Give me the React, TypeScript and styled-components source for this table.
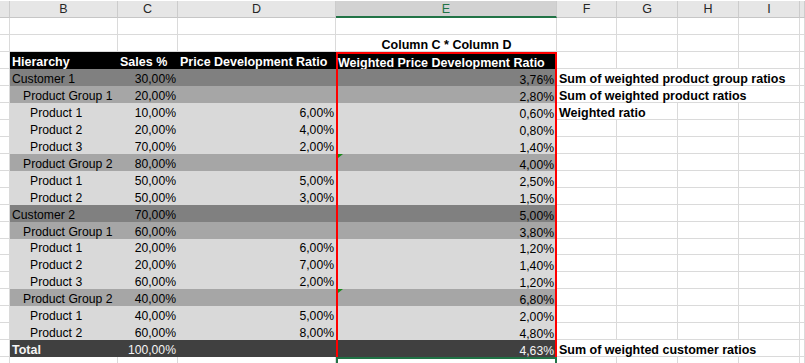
import styled, { createGlobalStyle, css } from 'styled-components'

const GlobalStyle = createGlobalStyle`
  html, body {
    margin: 0;
    padding: 0;
    background: #ffffff;
  }
  body {
    font-family: "Liberation Sans", Arial, sans-serif;
    overflow: hidden;
  }
`

const GRID = '#dadada'
const COLUMNS = '10px 108px 60px 158px 221px 60px 61px 61px 61px 1fr'
const ROW_H = '16.94px'

type Level = 'head' | 'customer' | 'group' | 'product' | 'total'
type Align = 'left' | 'right' | 'center'
type Edge = 'top' | 'side' | 'selected'

const FILL: Record<Level, string> = {
  head: '#000000',
  customer: '#808080',
  group: '#a6a6a6',
  product: '#d9d9d9',
  total: '#404040',
}

const INK: Record<Level, string> = {
  head: '#ffffff',
  customer: '#000000',
  group: '#000000',
  product: '#000000',
  total: '#f4f4f4',
}

const INDENT: Record<Level, number> = {
  head: 2,
  customer: 2,
  group: 13,
  product: 20,
  total: 2,
}

const Sheet = styled.div`
  width: 805px;
  height: 363px;
  overflow: hidden;
  padding-top: 1.4px;
  box-sizing: border-box;
`

const HeaderRow = styled.div`
  display: grid;
  grid-template-columns: ${COLUMNS};
  height: ${ROW_H};
`

const HeaderCell = styled.div<{ $active?: boolean }>`
  box-sizing: border-box;
  display: flex;
  align-items: center;
  justify-content: center;
  background: ${(p) => (p.$active ? '#d2d2d2' : '#e6e6e6')};
  color: ${(p) => (p.$active ? '#217346' : '#262626')};
  border-right: 1px solid #cccccc;
  border-bottom: ${(p) => (p.$active ? '2px solid #217346' : '1px solid #c6c6c6')};
  font-size: 12.5px;
`

const Row = styled.div`
  display: grid;
  grid-template-columns: ${COLUMNS};
  height: ${ROW_H};
`

// the red frame round column E, and Excel's green active-cell box
const edges = {
  top: css`
    border-bottom: none;
    border-right-color: #ff0000;
    box-shadow: inset 2px 2px 0 #ff0000, inset -1px 0 0 #ff0000;
    padding-right: 2px;
  `,
  side: css`
    border-bottom: none;
    border-right-color: #ff0000;
    box-shadow: inset 2px 0 0 #ff0000, inset -1px 0 0 #ff0000;
    padding-right: 2px;
  `,
  selected: css`
    border-bottom: none;
    border-right-color: #217346;
    box-shadow: inset 2px 2px 0 #217346, inset -1px 0 0 #217346;
  `,
}

const JUSTIFY: Record<Align, string> = {
  left: 'flex-start',
  right: 'flex-end',
  center: 'center',
}

const Cell = styled.div<{
  $fill?: string
  $ink?: string
  $align?: Align
  $bold?: boolean
  $indent?: number
  $span?: number
  $edge?: Edge
}>`
  position: relative;
  box-sizing: border-box;
  min-width: 0;
  grid-column: span ${(p) => p.$span ?? 1};
  display: flex;
  align-items: flex-end;
  justify-content: ${(p) => JUSTIFY[p.$align ?? 'left']};
  background: ${(p) => p.$fill ?? '#ffffff'};
  border-right: 1px solid ${(p) => p.$fill ?? GRID};
  border-bottom: 1px solid ${(p) => p.$fill ?? GRID};
  color: ${(p) => p.$ink ?? '#000000'};
  font-size: ${(p) => (p.$bold ? '12.5px' : '12.2px')};
  font-weight: ${(p) => (p.$bold ? 700 : 400)};
  line-height: 12px;
  padding-left: ${(p) => (p.$align === 'right' ? 0 : p.$indent ?? 2)}px;
  padding-right: 1px;
  white-space: nowrap;
  ${(p) => p.$edge && edges[p.$edge]}
`

const ErrorFlag = styled.span`
  position: absolute;
  top: 0;
  left: 2px;
  width: 0;
  height: 0;
  border-top: 4px solid #1a8a1a;
  border-right: 5px solid transparent;
`

interface Line {
  level: Level
  label: string
  sales: string
  price?: string
  weighted: string
  note?: string
  span?: number
  flag?: boolean
}

const LINES: Line[] = [
  { level: 'customer', label: 'Customer 1', sales: '30,00%', weighted: '3,76%', note: 'Sum of weighted product group ratios', span: 4 },
  { level: 'group', label: 'Product Group 1', sales: '20,00%', weighted: '2,80%', note: 'Sum of weighted product ratios', span: 4 },
  { level: 'product', label: 'Product 1', sales: '10,00%', price: '6,00%', weighted: '0,60%', note: 'Weighted ratio', span: 2 },
  { level: 'product', label: 'Product 2', sales: '20,00%', price: '4,00%', weighted: '0,80%' },
  { level: 'product', label: 'Product 3', sales: '70,00%', price: '2,00%', weighted: '1,40%' },
  { level: 'group', label: 'Product Group 2', sales: '80,00%', weighted: '4,00%', flag: true },
  { level: 'product', label: 'Product 1', sales: '50,00%', price: '5,00%', weighted: '2,50%' },
  { level: 'product', label: 'Product 2', sales: '50,00%', price: '3,00%', weighted: '1,50%' },
  { level: 'customer', label: 'Customer 2', sales: '70,00%', weighted: '5,00%' },
  { level: 'group', label: 'Product Group 1', sales: '60,00%', weighted: '3,80%' },
  { level: 'product', label: 'Product 1', sales: '20,00%', price: '6,00%', weighted: '1,20%' },
  { level: 'product', label: 'Product 2', sales: '20,00%', price: '7,00%', weighted: '1,40%' },
  { level: 'product', label: 'Product 3', sales: '60,00%', price: '2,00%', weighted: '1,20%' },
  { level: 'group', label: 'Product Group 2', sales: '40,00%', weighted: '6,80%', flag: true },
  { level: 'product', label: 'Product 1', sales: '40,00%', price: '5,00%', weighted: '2,00%' },
  { level: 'product', label: 'Product 2', sales: '60,00%', price: '8,00%', weighted: '4,80%' },
  { level: 'total', label: 'Total', sales: '100,00%', weighted: '4,63%', note: 'Sum of weighted customer ratios', span: 4 },
]

const LETTERS = ['B', 'C', 'D', 'E', 'F', 'G', 'H', 'I', '']

// columns F..J to the right of the table; a note spills over `span` of them
function Tail({ note, span = 1 }: { note?: string; span?: number }) {
  const rest = note ? 5 - span : 5
  return (
    <>
      {note && (
        <Cell $bold $span={span}>
          {note}
        </Cell>
      )}
      {Array.from({ length: rest }, (_, i) => (
        <Cell key={i} />
      ))}
    </>
  )
}

function TableLine({ line }: { line: Line }) {
  const fill = FILL[line.level]
  const ink = INK[line.level]
  return (
    <Row>
      <Cell />
      <Cell $fill={fill} $ink={ink} $indent={INDENT[line.level]} $bold={line.level === 'total'}>
        {line.label}
      </Cell>
      <Cell $fill={fill} $ink={ink} $align="right">
        {line.sales}
      </Cell>
      <Cell $fill={fill} $ink={ink} $align="right">
        {line.price}
      </Cell>
      <Cell $fill={fill} $ink={ink} $align="right" $edge="side">
        {line.flag && <ErrorFlag />}
        {line.weighted}
      </Cell>
      <Tail note={line.note} span={line.span} />
    </Row>
  )
}

export default function App() {
  const head = FILL.head
  return (
    <>
      <GlobalStyle />
      <Sheet>
        <HeaderRow>
          <HeaderCell />
          {LETTERS.map((l, i) => (
            <HeaderCell key={i} $active={l === 'E'}>
              {l}
            </HeaderCell>
          ))}
        </HeaderRow>

        <Row>
          {Array.from({ length: 10 }, (_, i) => (
            <Cell key={i} />
          ))}
        </Row>

        <Row>
          <Cell />
          <Cell />
          <Cell />
          <Cell />
          <Cell $bold $align="center">
            Column C * Column D
          </Cell>
          <Tail />
        </Row>

        <Row>
          <Cell />
          <Cell $fill={head} $ink="#ffffff" $bold>
            Hierarchy
          </Cell>
          <Cell $fill={head} $ink="#ffffff" $bold>
            Sales %
          </Cell>
          <Cell $fill={head} $ink="#ffffff" $bold>
            Price Development Ratio
          </Cell>
          <Cell $fill={head} $ink="#ffffff" $bold $edge="top">
            Weighted Price Development Ratio
          </Cell>
          <Tail />
        </Row>

        {LINES.map((line, i) => (
          <TableLine key={i} line={line} />
        ))}

        <Row>
          <Cell />
          <Cell />
          <Cell />
          <Cell />
          <Cell $edge="selected" />
          <Tail />
        </Row>
      </Sheet>
    </>
  )
}
